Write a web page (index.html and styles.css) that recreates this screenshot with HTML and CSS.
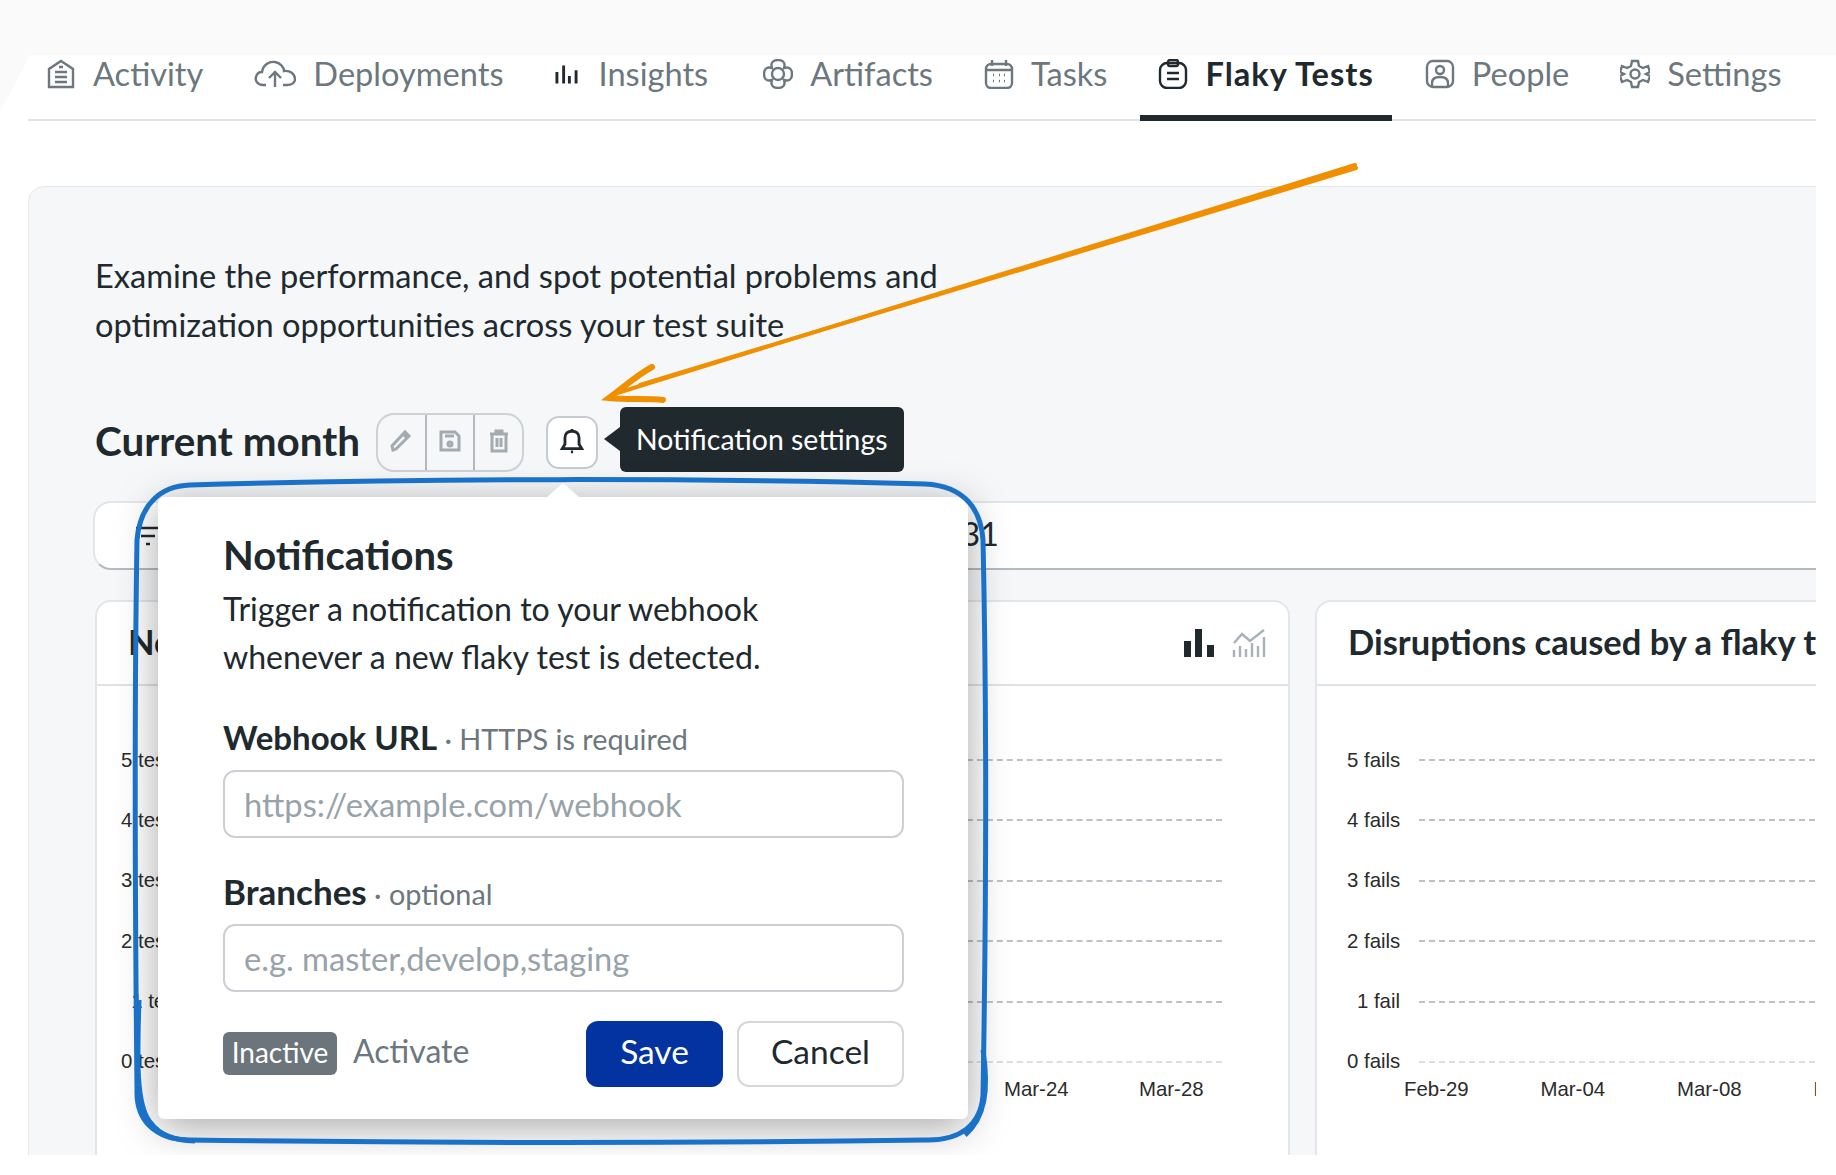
FILE: index.html
```html
<!DOCTYPE html>
<html lang="en">
<head>
  <meta charset="UTF-8">
  <title>Flaky Tests</title>
  <link rel="stylesheet" href="styles.css">
</head>
<body>
  <div class="top-strip"></div>
  <div class="page">

    <!-- Project tabs -->
    <nav class="tabs">
      <a class="tab" href="#">
        <svg class="tab-icon" viewBox="0 0 30 30"><path d="M15 2 L27 10 V28 H3 V10 Z M9 13 H21 M9 18 H21 M9 23 H21 M13 8 H17"/></svg>
        Activity
      </a>
      <a class="tab" href="#">
        <svg class="tab-icon tab-icon-wide" viewBox="0 0 42 30"><path d="M12 26 H9 C3 26 1 21 2 18 C3 14 6 13 8 13 C9 6 15 2 21 3 C26 4 30 8 30 12 C36 11 41 15 41 20 C41 24 37 26 33 26 H29 M21 28 V14 M15 19 L21 13 L27 19"/></svg>
        Deployments
      </a>
      <a class="tab tab-insights" href="#">
        <svg class="tab-icon tab-icon-bars" viewBox="0 0 24 20"><path d="M2 8 V20 M9 1 V20 M15 12 V20 M22 6 V20"/></svg>
        Insights
      </a>
      <a class="tab" href="#">
        <svg class="tab-icon" viewBox="0 0 30 30"><circle cx="15" cy="15" r="6"/><path d="M9 9 C7 3 11 1 15 1 C19 1 23 3 21 9 C27 7 29 11 29 15 C29 19 27 23 21 21 C23 27 19 29 15 29 C11 29 7 27 9 21 C3 23 1 19 1 15 C1 11 3 7 9 9 Z"/></svg>
        Artifacts
      </a>
      <a class="tab" href="#">
        <svg class="tab-icon" viewBox="0 0 30 30"><rect x="2" y="5" width="26" height="24" rx="5"/><path d="M2 11 H28 M8 1 V7 M22 1 V7 M9 16 H10 M15 16 H16 M20 16 H21 M9 22 H10 M15 22 H16 M20 22 H21"/></svg>
        Tasks
      </a>
      <a class="tab active" href="#">
        <svg class="tab-icon" viewBox="0 0 30 30"><rect x="2" y="4" width="26" height="25" rx="7"/><rect x="10" y="1" width="10" height="6" rx="2"/><path d="M9 14 H21 M9 20 H21"/></svg>
        Flaky Tests
      </a>
      <a class="tab" href="#">
        <svg class="tab-icon" viewBox="0 0 30 30"><rect x="2" y="2" width="26" height="26" rx="6"/><circle cx="15" cy="11" r="4"/><path d="M7 28 V24 C7 20 10 18 15 18 C20 18 23 20 23 24 V28"/></svg>
        People
      </a>
      <a class="tab" href="#">
        <svg class="tab-icon" viewBox="0 0 30 30"><circle cx="15" cy="15" r="4.5"/><path d="M12 2 H18 L19 7 L23 9 L28 7 L30 13 L26 15 L30 17 L28 23 L23 21 L19 23 L18 28 H12 L11 23 L7 21 L2 23 L0 17 L4 15 L0 13 L2 7 L7 9 L11 7 Z"/></svg>
        Settings
      </a>
    </nav>

    <main class="panel">
      <p class="intro">Examine the performance, and spot potential problems and<br>optimization opportunities across your test suite</p>

      <div class="report-head">
        <h1>Current month</h1>
        <div class="btn-group">
          <button class="icon-btn">
            <svg viewBox="0 0 24 24"><path d="M4 21 L3 17 L16 3 L20 7 L7 20 Z M14 5 L18 9"/></svg>
          </button>
          <button class="icon-btn">
            <svg viewBox="0 0 24 24"><path d="M3 3 H17 L21 7 V21 H3 Z M7 7 H16"/><circle cx="12" cy="15" r="2"/></svg>
          </button>
          <button class="icon-btn">
            <svg viewBox="0 0 24 24"><path d="M3 5 H21 M9 5 V2 H15 V5 M5 5 V22 H19 V5 M10 9 V18 M14 9 V18"/></svg>
          </button>
        </div>
        <button class="bell-btn">
          <svg viewBox="0 0 24 24"><path d="M3 19 H21 L18.5 15 V9 C18.5 5 16 3 12 3 C8 3 5.5 5 5.5 9 V15 Z M12 1 V3 M11 22 H13"/></svg>
        </button>
      </div>

      <div class="filter-bar">
        <svg class="filter-icon" viewBox="0 0 24 20"><path d="M0 2 H24 M5 10 H19 M10 18 H14"/></svg>
        <span class="filter-query">@date.from:2024-03-01 @date.to:2024-03-31</span>
      </div>

      <div class="charts">
        <section class="card">
          <header class="card-head">
            <h2>New flaky tests</h2>
            <div class="chart-toggle">
              <svg class="toggle-bars" viewBox="0 0 32 28"><path d="M1 12 H8 V28 H1 Z M12 0 H19 V28 H12 Z M24 16 H31 V28 H24 Z"/></svg>
              <svg class="toggle-line" viewBox="0 0 34 28"><path d="M2 28 V21 M8 28 V17 M14 28 V20 M20 28 V14 M26 28 V17 M32 28 V8 M2 14 L10 5 L18 12 L32 1"/></svg>
            </div>
          </header>
          <div class="chart chart-tests">
            <div class="grid-row"><span class="grid-label">5 tests</span><span class="grid-line"></span></div>
            <div class="grid-row"><span class="grid-label">4 tests</span><span class="grid-line"></span></div>
            <div class="grid-row"><span class="grid-label">3 tests</span><span class="grid-line"></span></div>
            <div class="grid-row"><span class="grid-label">2 tests</span><span class="grid-line"></span></div>
            <div class="grid-row"><span class="grid-label">1 test</span><span class="grid-line"></span></div>
            <div class="grid-row"><span class="grid-label">0 tests</span><span class="grid-line grid-line-base"></span></div>
            <div class="x-axis">
              <span>Feb-29</span><span>Mar-04</span><span>Mar-08</span><span>Mar-12</span><span>Mar-16</span><span>Mar-20</span><span>Mar-24</span><span>Mar-28</span>
            </div>
          </div>
        </section>

        <section class="card">
          <header class="card-head">
            <h2>Disruptions caused by a flaky test</h2>
          </header>
          <div class="chart chart-fails">
            <div class="grid-row"><span class="grid-label">5 fails</span><span class="grid-line"></span></div>
            <div class="grid-row"><span class="grid-label">4 fails</span><span class="grid-line"></span></div>
            <div class="grid-row"><span class="grid-label">3 fails</span><span class="grid-line"></span></div>
            <div class="grid-row"><span class="grid-label">2 fails</span><span class="grid-line"></span></div>
            <div class="grid-row"><span class="grid-label">1 fail</span><span class="grid-line"></span></div>
            <div class="grid-row"><span class="grid-label">0 fails</span><span class="grid-line grid-line-base"></span></div>
            <div class="x-axis">
              <span>Feb-29</span><span>Mar-04</span><span>Mar-08</span><span>Mar-12</span>
            </div>
          </div>
        </section>
      </div>
    </main>

    <!-- Overlays -->
    <div class="tooltip">Notification settings</div>

    <form class="popover">
      <h3>Notifications</h3>
      <p class="popover-text">Trigger a notification to your webhook<br>whenever a new flaky test is detected.</p>

      <label class="field-label" for="webhook"><b>Webhook URL</b> · HTTPS is required</label>
      <input class="field-input" id="webhook" type="text" placeholder="https://example.com/webhook">

      <label class="field-label field-label-second" for="branches"><b>Branches</b> · optional</label>
      <input class="field-input" id="branches" type="text" placeholder="e.g. master,develop,staging">

      <div class="popover-actions">
        <span class="badge">Inactive</span>
        <a class="activate" href="#">Activate</a>
        <button class="btn btn-save" type="button">Save</button>
        <button class="btn btn-cancel" type="button">Cancel</button>
      </div>
    </form>

    <!-- Hand drawn annotations on top of the screenshot -->
    <svg class="annotations" viewBox="0 0 1816 1155">
      <polygon class="corner-wedge" points="0,55 30,55 0,112"/>
      <path class="mark-blue" d="M190 485 C420 478 700 478 925 484 C965 486 981 510 983 540 C987 720 986 920 983 1095 C981 1125 960 1141 925 1140 C700 1143 420 1143 190 1140 C155 1140 136 1120 137 1090 C135 900 134 720 137 540 C140 505 160 486 190 485 Z"/>
      <path class="mark-blue" d="M139 1000 C137 1060 136 1105 150 1122 C160 1136 175 1140 195 1141"/>
      <path class="mark-blue" d="M983 1050 C989 1090 985 1118 965 1135"/>
      <path class="mark-orange" d="M1355 165 L614 394"/>
      <path class="mark-orange" d="M1356 168 L640 385"/>
      <path class="mark-orange mark-orange-head" d="M652 367 C637 375 624 387 609 398 C628 400 647 398 663 400"/>
    </svg>
  </div>
</body>
</html>
```

FILE: styles.css
```css
/* Reset */
body, h1, h2, h3, p {
    margin: 0;
    padding: 0;
}

body {
    background: #fff;
    color: #20292e;
    font-family: "Lato", "Liberation Sans", sans-serif;
    font-size: 32.6px;
}

.top-strip {
    position: absolute;
    top: 0;
    left: 0;
    width: 100%;
    height: 55px;
    background: #fafafb;
}

.page {
    position: relative;
    width: 1816px;
    height: 1155px;
    padding-top: 55px;
    box-sizing: border-box;
    overflow: hidden;
}

/* Tabs */
.tabs {
    display: flex;
    gap: 15px;
    margin-left: 28px;
    height: 64px;
    border-bottom: 2px solid #dde3e8;
}

.tab {
    display: flex;
    align-items: center;
    gap: 17px;
    height: 37px;
    padding: 0 18px 23px;
    border-bottom: 6px solid transparent;
    color: #6c777e;
    text-decoration: none;
    white-space: nowrap;
}

.tab.active {
    color: #20292e;
    font-weight: 700;
    letter-spacing: 1px;
    border-bottom-color: #20292e;
}

.tab-insights {
    margin-right: 4px;
}

.tab-icon {
    width: 30px;
    height: 30px;
    fill: none;
    stroke: currentColor;
    stroke-width: 2.4;
    flex: none;
}

.tab-icon-wide {
    width: 42px;
}

.tab-icon-bars {
    width: 23px;
    height: 20px;
    stroke: #20292e;
    stroke-width: 3;
    margin-right: 4px;
}

/* Panel */
.panel {
    width: 1900px;
    height: 1100px;
    margin: 65px 0 0 28px;
    padding: 64px 0 0 66px;
    box-sizing: border-box;
    background: #f5f7f9;
    border: 1px solid #e4e8ec;
    border-radius: 16px;
}

.intro {
    line-height: 49px;
}

.report-head {
    display: flex;
    align-items: center;
    height: 59px;
    margin-top: 64px;
}

.report-head h1 {
    width: 281px;
    font-size: 40.4px;
    font-weight: 700;
    line-height: 54px;
    margin-bottom: 4px;
}

.btn-group {
    display: flex;
    width: 148px;
    height: 59px;
    box-sizing: border-box;
    border: 2px solid #cdd2d6;
    border-radius: 18px;
}

.icon-btn {
    flex: 1;
    padding: 0;
    background: none;
    border: none;
    border-left: 2px solid #b3b9be;
}

.icon-btn:first-child {
    border-left: none;
}

.icon-btn svg {
    width: 24px;
    height: 24px;
    fill: none;
    stroke: #a3abb1;
    stroke-width: 3;
}

.bell-btn {
    width: 52px;
    height: 53px;
    margin-left: 22px;
    padding: 0;
    background: #fff;
    border: 2px solid #c6cbcf;
    border-radius: 13px;
}

.bell-btn svg {
    width: 26px;
    height: 28px;
    fill: none;
    stroke: #20292e;
    stroke-width: 2.6;
}

.filter-bar {
    display: flex;
    align-items: center;
    height: 69px;
    box-sizing: border-box;
    margin: 29px 0 0 -2px;
    padding-left: 41px;
    background: #fff;
    border: 2px solid #e3e6e9;
    border-bottom-color: #b4babf;
    border-radius: 18px;
}

.filter-icon {
    width: 24px;
    height: 20px;
    flex: none;
    fill: none;
    stroke: #20292e;
    stroke-width: 2.4;
}

.filter-query {
    width: 839px;
    text-align: right;
    white-space: nowrap;
    margin-bottom: 4px;
}

/* Chart cards */
.charts {
    display: grid;
    grid-template-columns: 1195px 1fr;
    gap: 25px;
    margin-top: 30px;
}

.card {
    height: 600px;
    background: #fff;
    border: 2px solid #e2e6ea;
    border-radius: 16px;
}

.card-head {
    display: flex;
    align-items: center;
    justify-content: space-between;
    height: 82px;
    padding: 0 22px 0 31px;
    border-bottom: 2px solid #dfe3e7;
}

.card-head h2 {
    font-size: 34.5px;
    font-weight: 700;
    white-space: nowrap;
    margin-bottom: 4px;
}

.chart-toggle {
    display: flex;
    gap: 17px;
}

.toggle-bars {
    width: 32px;
    height: 28px;
    fill: #20292e;
}

.toggle-line {
    width: 34px;
    height: 28px;
    fill: none;
    stroke: #a9b2b8;
    stroke-width: 2.4;
}

.chart {
    display: flex;
    flex-direction: column;
    gap: 36.4px;
    padding-top: 62px;
    font-family: "Liberation Sans", Arial, sans-serif;
    font-size: 20.4px;
    color: #2b2b2b;
}

.chart-tests {
    padding-left: 24px;
    padding-right: 66px;
}

.chart-fails {
    padding-left: 30px;
}

.grid-row {
    display: flex;
    align-items: center;
    gap: 19px;
    height: 24px;
}

.grid-label {
    flex: none;
    text-align: right;
    white-space: nowrap;
}

.chart-tests .grid-label {
    width: 60px;
}

.chart-fails .grid-label {
    width: 53px;
}

.grid-line {
    flex: 1;
    border-top: 2px dashed #bcc2c7;
}

.grid-line-base {
    border-top-color: #dcdfe2;
}

.x-axis {
    display: flex;
    margin-top: -33.5px;
    line-height: 24px;
    white-space: nowrap;
}

.x-axis span {
    flex: none;
    width: 64px;
}

.chart-tests .x-axis {
    gap: 71px;
    padding-left: 73px;
}

.chart-fails .x-axis {
    gap: 72.5px;
    padding-left: 57px;
}

/* Tooltip */
.tooltip {
    position: absolute;
    left: 620px;
    top: 407px;
    width: 284px;
    height: 65px;
    line-height: 65px;
    box-sizing: border-box;
    padding-left: 16px;
    background: #20292e;
    color: #fff;
    font-size: 28.4px;
    border-radius: 6px;
    white-space: nowrap;
}

.tooltip::before {
    content: "";
    position: absolute;
    left: -16px;
    top: 20px;
    border-style: solid;
    border-width: 12px 16px 12px 0;
    border-color: transparent #20292e transparent transparent;
}

/* Notifications popover */
.popover {
    position: absolute;
    left: 158px;
    top: 497px;
    width: 810px;
    height: 622px;
    box-sizing: border-box;
    padding: 38px 64px 0 65px;
    background: #fff;
    border-radius: 6px;
    box-shadow: 0 8px 40px rgba(0, 0, 0, 0.35);
}

.popover::before {
    content: "";
    position: absolute;
    left: 389px;
    top: -14px;
    border-style: solid;
    border-width: 0 16px 14px 16px;
    border-color: transparent transparent #fff transparent;
}

.popover h3 {
    font-size: 40px;
    font-weight: 700;
    line-height: 40px;
}

.popover-text {
    margin-top: 10px;
    line-height: 48px;
    font-size: 32.1px;
}

.field-label {
    display: block;
    height: 32px;
    margin-top: 40px;
    line-height: 32px;
    font-size: 28.8px;
    color: #6c777e;
}

.field-label b {
    font-size: 33px;
    color: #20292e;
}

.field-label-second {
    margin-top: 37px;
}

.field-label-second b {
    font-size: 35px;
}

.field-input {
    display: block;
    width: 100%;
    height: 68px;
    box-sizing: border-box;
    margin-top: 17px;
    padding: 0 19px;
    background: #fff;
    border: 2px solid #ccd0d4;
    border-radius: 12px;
    font-family: inherit;
    font-size: 32.7px;
    color: #20292e;
}

.field-input::placeholder {
    color: #97a2a9;
}

.popover-actions {
    display: flex;
    align-items: center;
    gap: 14px;
    margin-top: 29px;
}

.badge {
    width: 114px;
    height: 43px;
    line-height: 41px;
    margin-bottom: 2px;
    background: #6c757b;
    color: #fff;
    font-size: 28px;
    text-align: center;
    border-radius: 6px;
}

.activate {
    margin: 0 0 7px 2px;
    color: #6c777e;
    text-decoration: none;
    font-size: 32px;
}

.btn {
    height: 66px;
    box-sizing: border-box;
    padding: 0 0 7px;
    font-family: inherit;
    font-size: 33.5px;
    border-radius: 12px;
}

.btn-save {
    width: 137px;
    margin-left: auto;
    background: #0233a0;
    color: #fff;
    border: none;
}

.btn-cancel {
    width: 167px;
    background: #fff;
    color: #20292e;
    border: 2px solid #d5d8db;
}

/* Annotations */
.annotations {
    position: absolute;
    top: 0;
    left: 0;
    width: 1816px;
    height: 1155px;
    pointer-events: none;
}

.corner-wedge {
    fill: #fafafb;
}

.mark-blue {
    fill: none;
    stroke: #1a72c8;
    stroke-width: 5;
}

.mark-orange {
    fill: none;
    stroke: #f09000;
    stroke-width: 4;
    stroke-linecap: round;
}

.mark-orange-head {
    stroke-width: 6;
}
```
